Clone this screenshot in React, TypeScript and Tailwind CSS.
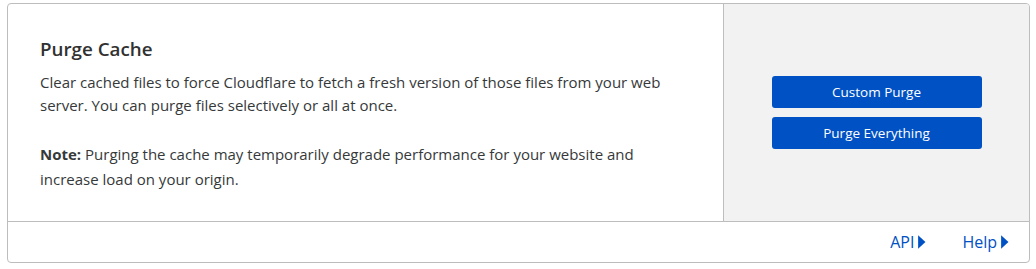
import { Fragment } from "react"

function Caret() {
  return (
    <svg viewBox="0 0 8 12" className="ml-[3px] h-[14px] w-[9px] fill-current" aria-hidden="true">
      <path d="M1 0 L7.5 6 L1 12 Z" />
    </svg>
  )
}

export default function App() {
  const links = ["API", "Help"]
  return (
    <div className="bg-white px-[7px] pt-[3px] font-['Segoe_UI','Open_Sans','Noto_Sans',sans-serif] text-[#36393a]">
      <div className="w-[1023px] overflow-hidden rounded-[4px] border border-[#bdbdbd] bg-white">
        <div className="flex border-b border-[#bdbdbd]">
          <div className="flex-1 px-[32px] pt-[33px] pb-[29px]">
            <h3 className="text-[18.8px] font-semibold leading-[24px] text-[#313131]">Purge Cache</h3>
            <p className="mt-[10px] text-[15px] leading-[23px]">
              Clear cached files to force Cloudflare to fetch a fresh version of those files from your web
              <br />
              server. You can purge files selectively or all at once.
            </p>
            <p className="mt-[25px] text-[15px] leading-[25px]">
              <span className="font-bold">Note:</span> Purging the cache may temporarily degrade performance for your website and
              <br />
              increase load on your origin.
            </p>
          </div>
          <div className="flex w-[306px] flex-col items-center justify-center gap-[9px] border-l border-[#bdbdbd] bg-[#f2f2f2]">
            <button className="h-[32px] w-[210px] rounded-[3px] bg-[#0051c3] text-[13.5px] text-white">Custom Purge</button>
            <button className="h-[32px] w-[210px] rounded-[3px] bg-[#0051c3] text-[13.5px] text-white">Purge Everything</button>
          </div>
        </div>
        <div className="flex h-[40px] items-center justify-end gap-[36px] pr-[20px]">
          {links.map((l) => (
            <Fragment key={l}>
              <a className="flex items-center text-[16px] text-[#0051c3]">
                {l}
                <Caret />
              </a>
            </Fragment>
          ))}
        </div>
      </div>
    </div>
  )
}
